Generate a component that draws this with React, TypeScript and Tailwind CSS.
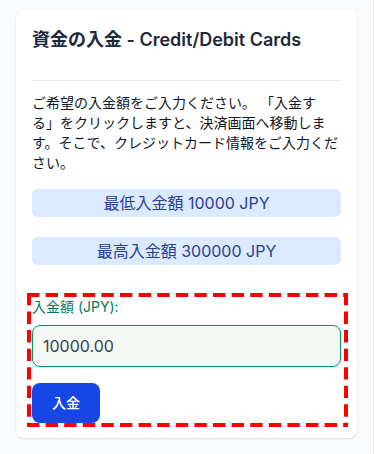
// dashed frame drawn as svg lines so the dash length matches the screenshot
function DashedFrame() {
    const h = "12.4 6.2";
    const v = "12.35 6.2";
    return (
        <svg className="absolute inset-0 w-full h-full overflow-visible pointer-events-none">
            <line x1="0" y1="2" x2="100%" y2="2" stroke="#ff0000" strokeWidth="4" strokeDasharray={h} />
            <line x1="0" y1="100%" x2="100%" y2="100%" transform="translate(0,-2)" stroke="#ff0000" strokeWidth="4" strokeDasharray={h} />
            <line x1="2" y1="0" x2="2" y2="100%" stroke="#ff0000" strokeWidth="4" strokeDasharray={v} />
            <line x1="100%" y1="0" x2="100%" y2="100%" transform="translate(-2,0)" stroke="#ff0000" strokeWidth="4" strokeDasharray={v} />
        </svg>
    );
}

export default function App() {
    return (
        <div className="min-h-[454px] bg-gray-50 flex font-['Inter','Noto_Sans_CJK_JP',sans-serif] [text-spacing-trim:space-all]">
            <div className="w-[373px] px-4 pt-2.5 pb-4">
                <div className="bg-white rounded-lg shadow-sm px-4 pt-4 pb-[7px]">
                    <h2 className="text-lg leading-7 font-semibold text-gray-800">
                        <span className="font-bold">資金の入金</span> - Credit/Debit Cards
                    </h2>
                    <hr className="mt-[26px] border-gray-200" />
                    <p className="mt-3 text-sm leading-5 text-gray-900">
                        ご希望の入金額をご入力ください。 「入金する」をクリックしますと、決済画面へ移動します。そこで、クレジットカード情報をご入力ください。
                    </p>
                    <div className="mt-4 h-7 flex items-center justify-center rounded-md bg-blue-100 text-base text-[#2a3f94]">
                        最低入金額 10000 JPY
                    </div>
                    <div className="mt-5 h-7 flex items-center justify-center rounded-md bg-blue-100 text-base text-[#2a3f94]">
                        最高入金額 300000 JPY
                    </div>
                    <div className="relative mt-6 -ml-[9px] -mr-[11px] border-4 border-transparent pl-[5px] pr-[7px] pt-1 pb-1">
                        <DashedFrame />
                        <label className="block text-sm leading-5 text-emerald-700">入金額 (JPY):</label>
                        <input
                            type="text"
                            defaultValue="10000.00"
                            className="mt-2 block w-full h-[42px] rounded-lg border border-emerald-600 bg-[#f3f8f5] px-[10px] text-base text-gray-700 outline-none"
                        />
                        <button className="mt-4 h-10 w-[68px] rounded-lg bg-blue-700 text-sm font-medium text-white">
                            入金
                        </button>
                    </div>
                </div>
            </div>
            <div className="w-[2px] border-l border-gray-200 bg-white" />
        </div>
    );
}
